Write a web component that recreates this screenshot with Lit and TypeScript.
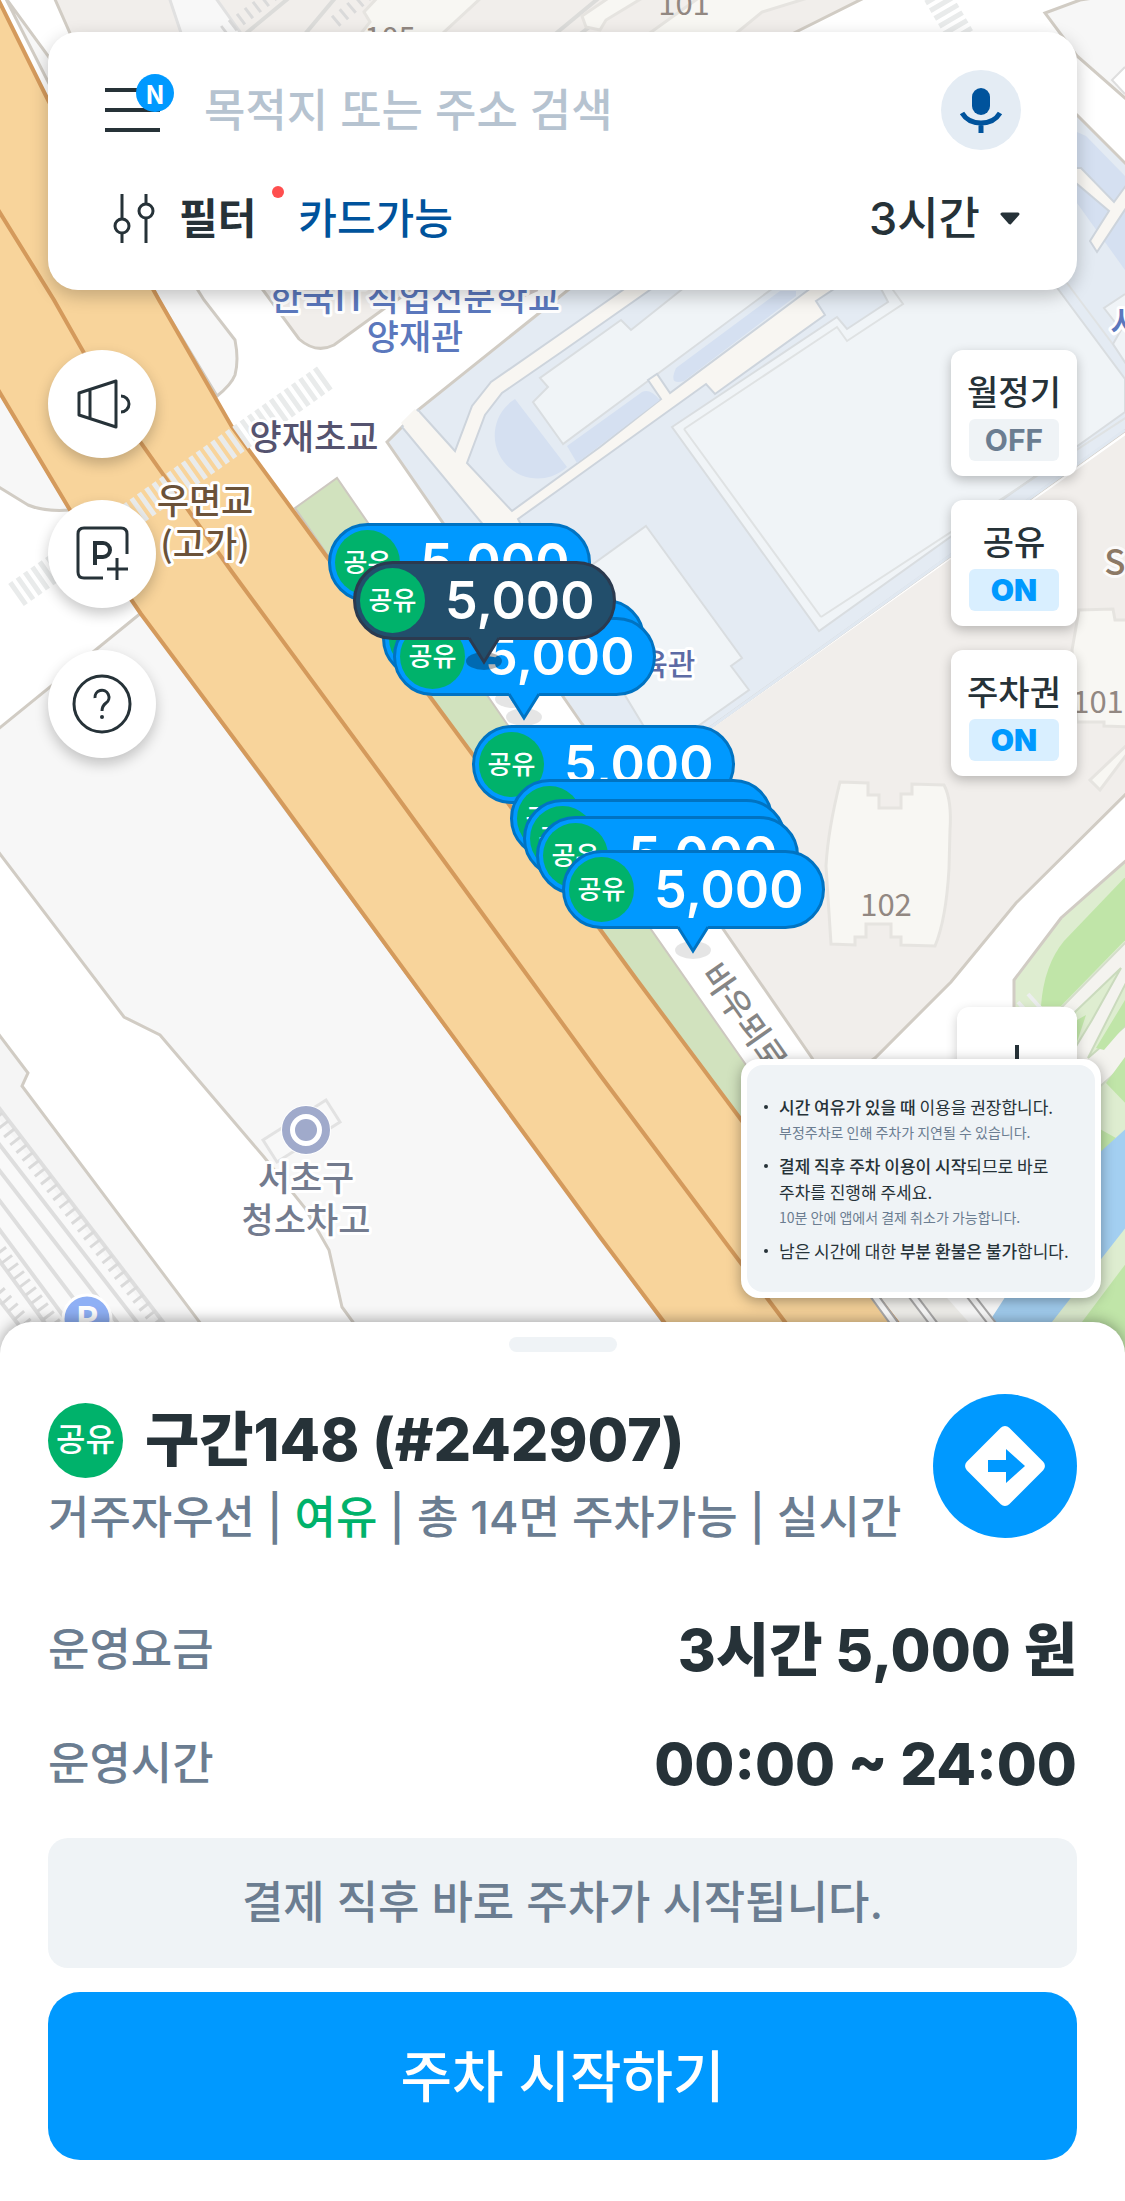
import { LitElement, html, svg, css } from "lit";
import { customElement, property, state } from "lit/decorators.js";
import { classMap } from "lit/directives/class-map.js";
import { styleMap } from "lit/directives/style-map.js";

interface Pin {
  x: number;
  y: number;
  price: string;
  selected?: boolean;
}

interface Toggle {
  name: string;
  on: boolean;
}

const PINS: Pin[] = [
  { x: 328, y: 523, price: "5,000" },
  { x: 382, y: 599, price: "5,000" },
  { x: 393, y: 617, price: "5,000" },
  { x: 353, y: 561, price: "5,000", selected: true },
  { x: 472, y: 725, price: "5,000" },
  { x: 510, y: 779, price: "5,000" },
  { x: 523, y: 799, price: "5,000" },
  { x: 536, y: 816, price: "5,000" },
  { x: 562, y: 850, price: "5,000" },
];

/* Street map drawn beneath the controls. */
@customElement("street-map")
export class StreetMap extends LitElement {
  static styles = css`
    :host {
      display: block;
      overflow: hidden;
      background: #fff;
    }
    svg {
      display: block;
      width: 100%;
      height: 100%;
      font-family: "Noto Sans CJK KR", sans-serif;
      font-weight: 500;
    }
    .kerb { stroke: #d1ccc4; stroke-width: 3; }
    .plot { fill: #f7f7f7; }
    .block { fill: #f1eeeb; }
    .campus { fill: #e4ebf3; }
    .hall { fill: #f0f4f7; stroke: #d9dde0; stroke-width: 2; }
    .house { fill: #f8f7f3; stroke: #e6e4e0; stroke-width: 3; }
    .lane { fill: #f8f6f2; stroke: #cdd4dc; stroke-width: 2; }
    .pond { fill: #d5e0f1; }
    .verge { fill: #d1e2be; stroke: #cdc8c0; stroke-width: 2; }
    .highway { fill: #f8d49b; }
    .edge { fill: none; stroke: #d49a5c; stroke-width: 4; }
    .zebra { fill: none; stroke: #e9ebeb; stroke-width: 27; stroke-dasharray: 5 4; }
    .lawn { fill: #deedd0; }
    .grass { fill: #c0e5a8; }
    .river { fill: #a3cff1; }
    .rail { fill: none; stroke: #dedede; stroke-width: 4; }
    .ties { fill: none; stroke: #dadada; stroke-width: 13; stroke-dasharray: 3 7; }
    .label { font-size: 35px; text-anchor: middle; paint-order: stroke; stroke: #fff; stroke-width: 6; stroke-linejoin: round; }
    .number { font-size: 31px; fill: #928882; text-anchor: middle; font-weight: 400; }
    .blue { fill: #5b78bd; }
    .violet { fill: #55536f; }
    .brown { fill: #6b5239; }
    .slate { fill: #737b8e; }
    .gym { fill: #5d6ba5; font-size: 30px; }
    .street { fill: #858585; font-size: 33px; }
  `;

  render() {
    return html`
      <svg viewBox="0 0 1125 1352" preserveAspectRatio="xMinYMin slice" role="img" aria-label="지도">
        ${this.north()} ${this.campus()} ${this.east()} ${this.south()} ${this.road()} ${this.labels()}
      </svg>
    `;
  }

  private north() {
    return svg`
      <path class="block kerb" d="M54 -3L73 40L263 290L299 339Q316 354 334 345L385 308L790 35L866 -3Z" />
      <path d="M169 -3H215L260 60H190Z" fill="#f8f8f8" stroke="#e1e1e1" stroke-width="3" />
      <path class="ties" d="M274 -6L224 32M368 -6L330 26" />
      <path d="M290 -3L238 40M336 -3L300 40M600 -3L548 40M630 -3L572 40" fill="none" stroke="#dcdcda" stroke-width="4" />
      <path class="house" d="M378 -3L364 12L370 22L352 45H430L482 -3Z" />
      <path class="house" d="M610 -3L582 16L586 27L600 30L606 20L644 -3ZM700 -3L640 40H728L762 12L811 -3Z" />
      <path class="zebra" d="M936 -6L966 45" />
      <path class="plot kerb" d="M1080 0L1045 13L1077 56L1125 98L1140 110V-9Z" />
      <path d="M1125 67L1112 80L1125 94" fill="#fff" stroke="#dedede" stroke-width="2" />
      <path class="plot kerb" d="M159 300L5 -3L73 90L204 300L235 340Q239 360 235 375Q231 385 217 396Z" />
    `;
  }

  private campus() {
    return svg`
      <path class="campus kerb" d="M387 442L402 427L418 410L568 290L860 90L1040 80L1077 115L1140 178V420L714 725L628 786L582 724Z" />
      <path class="pond" d="M1077 132L1086 136L1125 176V270L1077 203Z" />
      <path class="lane" d="M1070 168L1081 168L1114 202L1130 180V202L1097 252L1090 241L1109 211L1070 178Z" />
      <path class="hall" d="M672 427L837 317L847 329L888 302L879 285H1055L1125 379V412L819 631Z" />
      <path d="M684 429L837 327L847 341L903 304L888 283M1067 283L1130 367M1130 415L821 617Z" fill="none" stroke="#dfe2e3" stroke-width="2" />
      <path d="M684 429L821 617" fill="none" stroke="#dfe2e3" stroke-width="2" />
      <path class="hall" d="M563 444L533 402L548 387L540 378L621 320L631 330L690 283H780Z" />
      <path class="lane" d="M418 410L455 451L472 406L491 382L560 334L630 285H657L560 353L502 393L485 415L467 463L512 511L600 447L661 399L648 380L657 374L670 393L815 285H840L816 301L825 315L715 394L706 384L560 489L518 519L525 532L500 545L402 427Z" />
      <path d="M403 425L417 411" stroke="#f8f6f2" stroke-width="6" />
      <path class="pond" d="M515 399A43 43 0 1 0 567 467Z" />
      <path class="pond" d="M567 446L642 392Q650 388 660 400L577 463ZM676 368L780 291H796V296L684 381Q668 386 676 368Z" />
      <path class="hall" d="M646 526L742 658L731 666L749 690L660 753L560 588Z" />
      <path class="hall" d="M1125 294L1104 308L1121 330L1113 344L1130 370" />
      <path d="M1125 430L714 725L628 786" fill="none" stroke="#e0e8f1" stroke-width="3" />
      <path d="M504 300L536 286" stroke="#d2caca" stroke-width="11" />
    `;
  }

  private east() {
    return svg`
      <path class="block" d="M1130 432L714 727L628 786L582 724L812 1058L830 1090L875 1058L951 982L1016 903L1130 790Z" />
      <path class="kerb" fill="none" d="M582 724L812 1058L830 1090L875 1058L951 982L1016 903L1130 790" />
      <path class="house" d="M840 782L868 783V795H879V808H901V794H912V784L944 785Q952 800 950 830L949 869Q946 920 935 946L901 945V937H891V924H866V937H855V945L831 944L826 866Q828 830 840 782Z" />
      <path class="house" d="M1079 610L1113 609L1115 620H1130V727L1104 726V722H1077L1072 650Z" />
      <path class="house" d="M1130 750L1100 790L1090 780L1130 742Z" />
      <path class="lawn" d="M1130 857L1061 918L1014 980V1352H1130Z" />
      <path class="kerb" fill="none" d="M1130 857L1061 918L1014 980V1010" />
      <path class="grass" d="M1130 872L1064 941Q1044 965 1041 1006H1061L1130 935Z" />
      <path d="M1059 1010L1130 938V1060L1096 1090L1070 1050Z" fill="#f4f3ef" stroke="#d4ddca" stroke-width="2" />
      <path class="lawn" stroke="#cadabd" stroke-width="2" d="M1121 968L1075 1012V1048L1092 1020ZM1130 975L1088 1058L1130 1022Z" />
      <path class="grass" d="M1086 1015L1077 1020V1042ZM1125 1000L1096 1048L1104 1050L1130 1020Z" />
      <path class="grass" d="M1130 1050L1106 1083L1130 1108ZM1098 1128L1116 1138L1100 1154Z" />
      <path d="M1008 1010L1022 1028M1018 1002L1034 1020M1028 994L1044 1012" stroke="#eceeee" stroke-width="4" />
      <path class="river" d="M1130 1125L1098 1154L989 1322L965 1352H1030L1052 1322L1130 1222Z" />
      <path class="grass" d="M1130 1258L1082 1322V1352H1130Z" />
    `;
  }

  private south() {
    return svg`
      <path class="plot kerb" d="M-3 388L70 510Q45 512 28 505L-3 486Z" />
      <path class="plot kerb" d="M-3 730L141 613L680 1345H366L353 1322L342 1307L329 1250L305 1208L264 1157L160 1035L124 1017L-3 850Z" />
      <path class="kerb" fill="#f5f5f5" d="M-3 1032L28 1073L22 1086L222 1352H-3Z" />
      <path fill="#f9f9f9" d="M0 1120L180 1352H0Z" />
      <path class="rail" d="M-4 1104L186 1352M-4 1140L160 1352M-4 1166L140 1352M-4 1196L114 1352M-4 1225L90 1352M-4 1256L66 1352M-4 1296L40 1352" />
      <path class="ties" d="M-4 1116L180 1352M0 1250L76 1352M-14 1276L50 1352" />
      <path d="M263 1140L326 1100L340 1122L277 1162Z" fill="#f8f8f8" stroke="#e2e2e2" stroke-width="3" />
    `;
  }

  private road() {
    return svg`
      <path class="verge" d="M295 508L337 478L507 724L744 1062L910 1300V1352H880Z" />
      <path d="M877 1290H940L995 1352H910Z" fill="#f4f3ef" />
      <path class="highway" d="M-3 -3L48 100L159 300L232 427L327 557L473 755L637 980L742 1121L897 1322L920 1352H687L664 1322L600 1237L265 780L141 614L70 510L-3 388Z" />
      <path class="edge" d="M-3 -3L48 100L159 300L232 427L327 557L473 755L637 980L742 1121L897 1322L920 1352" />
      <path class="edge" d="M-3 208L54 300L84 353L141 443L198 524L232 572L385 780L600 1075L785 1322L808 1352" />
      <path class="edge" d="M-3 388L70 510L141 614L265 780L600 1237L664 1322L687 1352" />
      <path class="zebra" d="M130 516L327 376M16 595L80 550" />
      <path d="M870 1290L915 1352M908 1290L955 1352M966 1290L1014 1352" fill="none" stroke="#aeadad" stroke-width="9" />
      <path d="M870 1290L915 1352M908 1290L955 1352M966 1290L1014 1352" fill="none" stroke="#fff" stroke-width="5" />
    `;
  }

  private labels() {
    return svg`
      <text class="number" x="684" y="15">101</text>
      <text class="number" x="390" y="49">105</text>
      <text class="number" x="886" y="916">102</text>
      <text class="number" x="1098" y="713">101</text>
      <text class="label blue" x="415" y="311">한국IT직업전문학교</text>
      <text class="label blue" x="415" y="350">양재관</text>
      <text class="label violet" x="314" y="450">양재초교</text>
      <text class="label brown" x="205" y="514">우면교</text>
      <text class="label brown" x="205" y="557">(고가)</text>
      <text class="label gym" x="654" y="675">체육관</text>
      <text class="label blue" x="1126" y="336">서</text>
      <text class="label brown" x="1115" y="575" opacity="0.75">S</text>
      <text class="label street" transform="translate(697 970) rotate(55)" x="66" y="0">바우뫼로</text>
      <circle cx="306" cy="1130" r="25" fill="#fff" />
      <circle cx="306" cy="1130" r="20" fill="none" stroke="#a0aacb" stroke-width="8" />
      <circle cx="306" cy="1130" r="11" fill="#a0aacb" />
      <text class="label slate" x="306" y="1191">서초구</text>
      <text class="label slate" x="306" y="1233">청소차고</text>
      <circle cx="87" cy="1319" r="24" fill="#8fb0f5" stroke="#fff" stroke-width="3" />
      <text x="87" y="1331" text-anchor="middle" font-size="34" font-weight="700" fill="#fff">P</text>
    `;
  }
}

/* Speech-bubble price marker for one parking zone. */
@customElement("price-pin")
export class PricePin extends LitElement {
  @property() price = "";
  @property({ type: Boolean }) selected = false;

  static styles = css`
    :host {
      display: block;
      width: 263px;
    }
    .pin {
      position: relative;
      display: flex;
      align-items: center;
      gap: 20px;
      box-sizing: border-box;
      width: 100%;
      height: 79px;
      padding: 0 0 0 4px;
      border: 3px solid #0073c2;
      border-radius: 40px;
      background: #0099ff;
      color: #fff;
      font-family: Inter, "Noto Sans CJK KR", sans-serif;
      cursor: pointer;
    }
    .pin.selected {
      border-color: #2b3a4f;
      background: #224e6b;
    }
    .tail {
      position: absolute;
      left: 107px;
      top: 70px;
      width: 42px;
      height: 42px;
      overflow: visible;
    }
    .kind {
      display: grid;
      place-items: center;
      width: 65px;
      height: 65px;
      border-radius: 50%;
      background: #00b26b;
      font-size: 26px;
      font-weight: 500;
      line-height: 32px;
    }
    .price {
      position: relative;
      font-size: 52px;
      font-weight: 600;
      line-height: 60px;
    }
  `;

  render() {
    const fill = this.selected ? "#224e6b" : "#0099ff";
    const line = this.selected ? "#2b3a4f" : "#0073c2";
    return html`
      <button class=${classMap({ pin: true, selected: this.selected })} type="button">
        <svg class="tail" viewBox="0 0 42 42" aria-hidden="true">
          <ellipse cx="21" cy="27" rx="18" ry="9" fill="#000" fill-opacity=${this.selected ? 0.3 : 0.1} />
          <path d="M6 4L21 28L36 4V0H6Z" fill=${fill} />
          <path d="M6 4L21 28L36 4" fill="none" stroke=${line} stroke-width="3" />
        </svg>
        <span class="kind">공유</span>
        <span class="price">${this.price}</span>
      </button>
    `;
  }
}

@customElement("app-root")
export class AppRoot extends LitElement {
  @state() private toggles: Toggle[] = [
    { name: "월정기", on: false },
    { name: "공유", on: true },
    { name: "주차권", on: true },
  ];

  static styles = css`
    :host {
      display: flex;
      flex-direction: column;
      min-height: 100vh;
      background: #fff;
      color: #263238;
      font-family: Inter, "Noto Sans CJK KR", sans-serif;
      font-weight: 500;
    }
    button,
    input,
    select {
      margin: 0;
      padding: 0;
      border: 0;
      background: none;
      color: inherit;
      font: inherit;
    }
    button {
      cursor: pointer;
    }
    svg {
      display: block;
    }

    .map-area {
      position: relative;
      display: flex;
      flex: 1;
      flex-direction: column;
      gap: 60px;
      padding: 32px 48px 105px;
      overflow: hidden;
    }
    .map {
      position: absolute;
      inset: 0;
    }
    .pin {
      position: absolute;
    }

    .search-card {
      position: relative;
      display: flex;
      flex-direction: column;
      gap: 39px;
      padding: 38px 56px 41px;
      border-radius: 30px;
      background: #fff;
      box-shadow: 0 6px 18px rgba(0, 0, 0, 0.22);
    }
    .row {
      display: flex;
      align-items: center;
    }
    .menu {
      position: relative;
      margin-right: 44px;
    }
    .new {
      position: absolute;
      left: 32px;
      top: -13px;
      display: grid;
      place-items: center;
      width: 38px;
      height: 38px;
      border-radius: 50%;
      background: #0099ff;
      color: #fff;
      font-family: "Noto Sans CJK KR", sans-serif;
      font-size: 26px;
      font-weight: 700;
      line-height: 38px;
    }
    .search {
      flex: 1;
      min-width: 0;
      height: 64px;
      font-size: 45px;
      outline: none;
    }
    .search::placeholder {
      color: #b6c3d0;
      opacity: 1;
    }
    .mic {
      display: grid;
      place-items: center;
      width: 80px;
      height: 80px;
      border-radius: 50%;
      background: #e4ecf4;
    }
    .filters {
      height: 60px;
      padding-left: 9px;
      font-size: 42px;
      line-height: 60px;
    }
    .filter {
      position: relative;
      display: flex;
      align-items: center;
      gap: 24px;
      font-weight: 700;
    }
    .dot {
      position: absolute;
      right: -28px;
      top: -3px;
      width: 12px;
      height: 12px;
      border-radius: 50%;
      background: #ff4f4f;
    }
    .chosen {
      margin-left: 42px;
      color: #00539c;
    }
    .duration {
      position: relative;
      display: flex;
      align-items: center;
      gap: 18px;
      margin-left: auto;
    }
    .duration select {
      appearance: none;
      height: 60px;
      font-size: 45px;
      line-height: 60px;
    }

    .controls {
      position: relative;
      display: flex;
      flex: 1;
      justify-content: space-between;
      pointer-events: none;
    }
    .controls button {
      pointer-events: auto;
    }
    .left,
    .right {
      display: flex;
      flex-direction: column;
      align-items: flex-end;
    }
    .left {
      gap: 42px;
    }
    .right {
      gap: 24px;
    }
    .round {
      display: grid;
      place-items: center;
      width: 108px;
      height: 108px;
      border-radius: 50%;
      background: #fff;
      box-shadow: 0 6px 14px rgba(0, 0, 0, 0.22);
    }
    .toggle {
      display: flex;
      flex-direction: column;
      align-items: center;
      gap: 6px;
      box-sizing: border-box;
      width: 126px;
      height: 126px;
      padding-top: 23px;
      border-radius: 12px;
      background: #fff;
      box-shadow: 0 4px 12px rgba(0, 0, 0, 0.24);
      font-size: 34px;
      line-height: 40px;
    }
    .state {
      width: 90px;
      height: 42px;
      border-radius: 6px;
      background: #eff3f6;
      color: #6b7d91;
      font-size: 30px;
      font-weight: 700;
      line-height: 42px;
    }
    .state.on {
      background: #d9efff;
      color: #0099ff;
      font-weight: 900;
    }
    .zoom {
      display: flex;
      flex-direction: column;
      width: 120px;
      margin-top: auto;
      border-radius: 12px;
      background: #fff;
      box-shadow: 0 4px 12px rgba(0, 0, 0, 0.2);
    }
    .zoom button {
      display: grid;
      place-items: center;
      height: 120px;
    }

    .tip {
      position: absolute;
      right: 24px;
      bottom: 54px;
      box-sizing: border-box;
      width: 360px;
      border: 6px solid #fff;
      border-radius: 18px;
      background: #fff;
      box-shadow: 0 3px 14px rgba(0, 0, 0, 0.34);
      font-family: "Noto Sans CJK KR", sans-serif;
      font-weight: 400;
    }
    .tip ul {
      display: flex;
      flex-direction: column;
      gap: 8px;
      margin: 0;
      padding: 29px 0 28px 32px;
      border-radius: 16px;
      background: #eff3f6;
      list-style: none;
      font-size: 17px;
      line-height: 26px;
      white-space: nowrap;
    }
    .tip li {
      position: relative;
    }
    .tip li::before {
      content: "";
      position: absolute;
      left: -15px;
      top: 11px;
      width: 4px;
      height: 4px;
      border-radius: 50%;
      background: #263238;
    }
    .tip b {
      font-weight: 500;
    }
    .tip small {
      display: block;
      color: #6b7d91;
      font-size: 14px;
      line-height: 25px;
    }

    .sheet {
      position: relative;
      display: flex;
      flex-direction: column;
      margin-top: -30px;
      padding: 15px 48px 41px;
      border-radius: 32px 32px 0 0;
      background: #fff;
      box-shadow: 0 -2px 14px rgba(0, 0, 0, 0.32);
    }
    .handle {
      align-self: center;
      width: 108px;
      height: 15px;
      border-radius: 8px;
      background: #eff3f6;
    }
    .zone {
      display: flex;
      align-items: flex-start;
      justify-content: space-between;
      margin-top: 42px;
    }
    .about {
      padding-top: 6px;
    }
    .title {
      display: flex;
      align-items: center;
      gap: 22px;
    }
    .title h1 {
      margin: 0;
      font-size: 59px;
      font-weight: 800;
      line-height: 80px;
    }
    .badge {
      display: grid;
      place-items: center;
      width: 75px;
      height: 75px;
      border-radius: 50%;
      background: #00b26b;
      color: #fff;
      font-size: 32px;
      line-height: 40px;
    }
    .summary {
      margin: 8px 0 0;
      color: #6b7d91;
      font-size: 45px;
      line-height: 60px;
      white-space: nowrap;
    }
    .free {
      color: #00b26b;
    }
    .go {
      flex: none;
      border-radius: 50%;
    }
    .facts {
      display: flex;
      flex-direction: column;
      gap: 34px;
      margin: 62px 0 0;
    }
    .fact {
      display: flex;
      align-items: center;
      justify-content: space-between;
      line-height: 80px;
    }
    .fact dt {
      color: #6b7d91;
      font-size: 45px;
    }
    .fact dd {
      margin: 0;
      font-size: 58px;
      font-weight: 800;
    }
    .notice {
      margin: 34px 0 24px;
      border-radius: 20px;
      background: #eff3f6;
      color: #6b7d91;
      font-size: 45px;
      line-height: 130px;
      text-align: center;
    }
    .start {
      height: 168px;
      padding-bottom: 8px;
      border-radius: 32px;
      background: #0099ff;
      color: #fff;
      font-size: 56px;
    }
  `;

  private flip(index: number) {
    this.toggles = this.toggles.map((t, i) => (i === index ? { ...t, on: !t.on } : t));
  }

  private searchCard() {
    return html`
      <header class="search-card">
        <div class="row">
          <button class="menu" type="button" aria-label="메뉴">
            <svg width="56" height="46" viewBox="0 0 56 46">
              <path d="M1 3H56M1 23H56M1 43H56" stroke="#263238" stroke-width="4" />
            </svg>
            <span class="new">N</span>
          </button>
          <input class="search" type="search" aria-label="목적지 또는 주소 검색" placeholder="목적지 또는 주소 검색" />
          <button class="mic" type="button" aria-label="음성 검색">
            <svg width="44" height="48" viewBox="0 0 44 48">
              <rect x="13" y="2" width="18" height="27" rx="9" fill="#00539c" />
              <path d="M3 27Q9 37 22 37Q35 37 41 27M22 37V47" fill="none" stroke="#00539c" stroke-width="5" />
            </svg>
          </button>
        </div>
        <div class="row filters">
          <button class="filter" type="button">
            <svg width="42" height="50" viewBox="0 0 42 50" aria-hidden="true">
              <g fill="none" stroke="#263238" stroke-width="3">
                <path d="M9 0V25M9 40V49M33 0V10M33 25V49" />
                <circle cx="9" cy="32" r="7" />
                <circle cx="33" cy="17" r="7" />
              </g>
            </svg>
            필터
            <span class="dot"></span>
          </button>
          <span class="chosen">카드가능</span>
          <label class="duration">
            <select aria-label="주차 시간">
              <option>3시간</option>
            </select>
            <svg width="22" height="14" viewBox="0 0 22 14" aria-hidden="true">
              <path d="M3 2H19L11 11Z" fill="#263238" stroke="#263238" stroke-width="3" stroke-linejoin="round" />
            </svg>
          </label>
        </div>
      </header>
    `;
  }

  private leftControls() {
    return html`
      <nav class="left">
        <button class="round" type="button" aria-label="공지">
          <svg width="60" height="60" viewBox="0 0 60 60" fill="none" stroke="#263238" stroke-width="3" stroke-linejoin="round">
            <path d="M7 19L44 7V53L7 41ZM18 16V44" />
            <path d="M49 22A8 8 0 0 1 49 38" />
          </svg>
        </button>
        <button class="round" type="button" aria-label="주차장 제보">
          <svg width="60" height="60" viewBox="0 0 60 60" fill="none" stroke="#263238" stroke-width="3">
            <path d="M31 54H12Q6 54 6 48V10Q6 4 12 4H49Q55 4 55 10V30" />
            <path d="M23 41V19H31A7 7 0 0 1 31 33H23" stroke-width="4" />
            <path d="M35 45H56M45 34V56" />
          </svg>
        </button>
        <button class="round" type="button" aria-label="도움말">
          <svg width="60" height="60" viewBox="0 0 60 60" fill="none" stroke="#263238" stroke-width="3">
            <circle cx="30" cy="30" r="28" />
            <path d="M23 24A7 7 0 1 1 34 29Q30 32 30 37" stroke-width="3" />
            <circle cx="30" cy="43" r="2" fill="#263238" stroke="none" />
          </svg>
        </button>
      </nav>
    `;
  }

  private rightControls() {
    return html`
      <div class="right">
        ${this.toggles.map(
          (t, i) => html`
            <button class="toggle" type="button" aria-pressed=${t.on} @click=${() => this.flip(i)}>
              <span>${t.name}</span>
              <span class=${classMap({ state: true, on: t.on })}>${t.on ? "ON" : "OFF"}</span>
            </button>
          `,
        )}
        <div class="zoom">
          <button type="button" aria-label="확대">
            <svg width="44" height="44" viewBox="0 0 44 44"><path d="M22 0V44M0 22H44" stroke="#263238" stroke-width="4" /></svg>
          </button>
          <button type="button" aria-label="축소">
            <svg width="44" height="44" viewBox="0 0 44 44"><path d="M0 22H44" stroke="#263238" stroke-width="4" /></svg>
          </button>
        </div>
      </div>
    `;
  }

  private tip() {
    return html`
      <aside class="tip">
        <ul>
          <li><b>시간 여유가 있을 때</b> 이용을 권장합니다.<small>부정주차로 인해 주차가 지연될 수 있습니다.</small></li>
          <li><b>결제 직후 주차 이용이 시작</b>되므로 바로<br />주차를 진행해 주세요.<small>10분 안에 앱에서 결제 취소가 가능합니다.</small></li>
          <li>남은 시간에 대한 <b>부분 환불은 불가</b>합니다.</li>
        </ul>
      </aside>
    `;
  }

  private sheet() {
    return html`
      <section class="sheet">
        <div class="handle"></div>
        <div class="zone">
          <div class="about">
            <div class="title">
              <span class="badge">공유</span>
              <h1>구간148 (#242907)</h1>
            </div>
            <p class="summary">거주자우선 | <span class="free">여유</span> | 총 14면 주차가능 | 실시간</p>
          </div>
          <button class="go" type="button" aria-label="길찾기">
            <svg width="144" height="144" viewBox="0 0 144 144">
              <circle cx="72" cy="72" r="72" fill="#0099ff" />
              <rect x="42" y="42" width="60" height="60" rx="6" fill="#fff" transform="rotate(45 72 72)" />
              <path d="M55 66H73V55L92 72L73 89V78H55Z" fill="#0099ff" />
            </svg>
          </button>
        </div>
        <dl class="facts">
          <div class="fact"><dt>운영요금</dt><dd>3시간 5,000 원</dd></div>
          <div class="fact"><dt>운영시간</dt><dd>00:00 ~ 24:00</dd></div>
        </dl>
        <div class="notice">결제 직후 바로 주차가 시작됩니다.</div>
        <button class="start" type="button">주차 시작하기</button>
      </section>
    `;
  }

  render() {
    return html`
      <main class="map-area">
        <street-map class="map"></street-map>
        ${PINS.map(
          (p) => html`<price-pin
            class="pin"
            style=${styleMap({ left: `${p.x}px`, top: `${p.y}px` })}
            .price=${p.price}
            .selected=${p.selected ?? false}
          ></price-pin>`,
        )}
        ${this.searchCard()}
        <div class="controls">${this.leftControls()} ${this.rightControls()}</div>
        ${this.tip()}
      </main>
      ${this.sheet()}
    `;
  }
}
